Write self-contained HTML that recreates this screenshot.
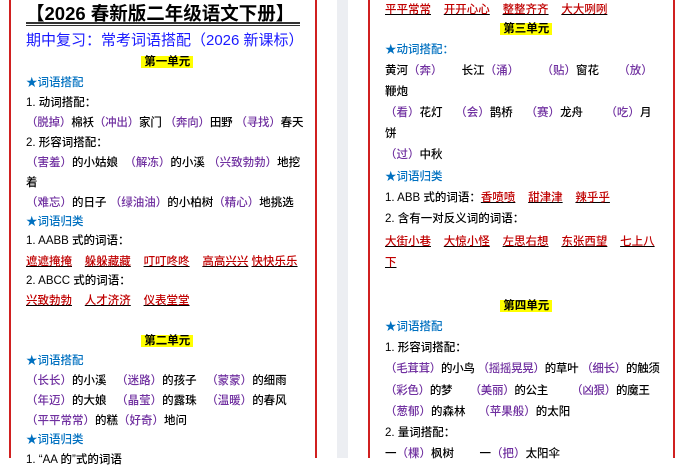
<!DOCTYPE html>
<html><head><meta charset="utf-8">
<style>
body{margin:0;width:682px;height:458px;overflow:hidden;background:#fff;position:relative;font-family:"Liberation Sans","Noto Sans CJK SC",sans-serif;font-size:11.5px;color:#000;font-weight:500;}
.l{position:absolute;white-space:pre;line-height:16px;}
.p{color:#7030a0}
.b{color:#0070c0}
.r{color:#c00000;text-decoration:underline;text-decoration-color:#000}
.h{background:#ffff00;font-weight:bold;color:#000}
.vl{position:absolute;top:0;height:458px;width:2px;background:#d02020}
</style></head><body>
<div class="vl" style="left:9px"></div>
<div class="vl" style="left:315px"></div>
<div style="position:absolute;left:337px;top:0;width:11px;height:458px;background:#eceef2"></div>
<div class="vl" style="left:368px"></div>
<div class="vl" style="left:673px"></div>

<div class="l" style="left:26px;top:3px;font-size:18.5px;font-weight:bold;line-height:22px;">【2026 春新版二年级语文下册】</div>
<div style="position:absolute;left:26px;top:22px;width:274px;height:1px;border-top:2px solid #333;border-bottom:1px solid #333;"></div>
<div class="l" style="left:26px;top:32px;font-size:15px;color:#1a1aff;line-height:18px;font-weight:normal;">期中复习：常考词语搭配（2026 新课标）</div>
<div class="l" style="left:141px;top:54px;"><span class="h"> 第一单元 </span></div>
<div class="l b" style="left:26px;top:75px;">★词语搭配</div>
<div class="l" style="left:26px;top:95px;">1. 动词搭配：</div>
<div class="l" style="left:26px;top:115px;letter-spacing:-0.2px"><span class="p">（脱掉）</span>棉袄<span class="p">（冲出）</span>家门 <span class="p">（奔向）</span>田野 <span class="p">（寻找）</span>春天</div>
<div class="l" style="left:26px;top:135px;">2. 形容词搭配：</div>
<div class="l" style="left:26px;top:155px;"><span class="p">（害羞）</span>的小姑娘  <span class="p">（解冻）</span>的小溪 <span class="p">（兴致勃勃）</span>地挖</div>
<div class="l" style="left:26px;top:175px;">着</div>
<div class="l" style="left:26px;top:195px;"><span class="p">（难忘）</span>的日子 <span class="p">（绿油油）</span>的小柏树<span class="p">（精心）</span>地挑选</div>
<div class="l b" style="left:26px;top:214px;">★词语归类</div>
<div class="l" style="left:26px;top:233px;">1. AABB 式的词语：</div>
<div class="l" style="left:26px;top:254px;"><span class="r">遮遮掩掩</span>    <span class="r">躲躲藏藏</span>    <span class="r">叮叮咚咚</span>    <span class="r">高高兴兴</span> <span class="r">快快乐乐</span></div>
<div class="l" style="left:26px;top:273px;">2. ABCC 式的词语：</div>
<div class="l" style="left:26px;top:293px;"><span class="r">兴致勃勃</span>    <span class="r">人才济济</span>    <span class="r">仪表堂堂</span></div>
<div class="l" style="left:141px;top:333px;"><span class="h"> 第二单元 </span></div>
<div class="l b" style="left:26px;top:353px;">★词语搭配</div>
<div class="l" style="left:26px;top:373px;"><span class="p">（长长）</span>的小溪   <span class="p">（迷路）</span>的孩子   <span class="p">（蒙蒙）</span>的细雨</div>
<div class="l" style="left:26px;top:393px;"><span class="p">（年迈）</span>的大娘   <span class="p">（晶莹）</span>的露珠   <span class="p">（温暖）</span>的春风</div>
<div class="l" style="left:26px;top:413px;"><span class="p">（平平常常）</span>的糕<span class="p">（好奇）</span>地问</div>
<div class="l b" style="left:26px;top:432px;">★词语归类</div>
<div class="l" style="left:26px;top:452px;">1. “AA 的”式的词语</div>

<div class="l" style="left:385px;top:2px;"><span class="r">平平常常</span>    <span class="r">开开心心</span>    <span class="r">整整齐齐</span>    <span class="r">大大咧咧</span></div>
<div class="l" style="left:500px;top:21px;"><span class="h"> 第三单元 </span></div>
<div class="l b" style="left:385px;top:42px;">★动词搭配：</div>
<div class="l" style="left:385px;top:63px;">黄河<span class="p">（奔）</span>      长江<span class="p">（涌）</span>       <span class="p">（贴）</span>窗花      <span class="p">（放）</span></div>
<div class="l" style="left:385px;top:84px;">鞭炮</div>
<div class="l" style="left:385px;top:105px;"><span class="p">（看）</span>花灯    <span class="p">（会）</span>鹊桥    <span class="p">（赛）</span>龙舟       <span class="p">（吃）</span>月</div>
<div class="l" style="left:385px;top:126px;">饼</div>
<div class="l" style="left:385px;top:147px;"><span class="p">（过）</span>中秋</div>
<div class="l b" style="left:385px;top:169px;">★词语归类</div>
<div class="l" style="left:385px;top:190px;">1. ABB 式的词语：<span class="r">香喷喷</span>    <span class="r">甜津津</span>    <span class="r">辣乎乎</span></div>
<div class="l" style="left:385px;top:211px;">2. 含有一对反义词的词语：</div>
<div class="l" style="left:385px;top:234px;"><span class="r">大街小巷</span>    <span class="r">大惊小怪</span>    <span class="r">左思右想</span>    <span class="r">东张西望</span>    <span class="r">七上八</span></div>
<div class="l" style="left:385px;top:255px;"><span class="r">下</span></div>
<div class="l" style="left:500px;top:298px;"><span class="h"> 第四单元 </span></div>
<div class="l b" style="left:385px;top:319px;">★词语搭配</div>
<div class="l" style="left:385px;top:340px;">1. 形容词搭配：</div>
<div class="l" style="left:385px;top:361px;letter-spacing:-0.3px"><span class="p">（毛茸茸）</span>的小鸟 <span class="p">（摇摇晃晃）</span>的草叶 <span class="p">（细长）</span>的触须</div>
<div class="l" style="left:385px;top:383px;letter-spacing:-0.3px"><span class="p">（彩色）</span>的梦      <span class="p">（美丽）</span>的公主        <span class="p">（凶狠）</span>的魔王</div>
<div class="l" style="left:385px;top:404px;"><span class="p">（葱郁）</span>的森林    <span class="p">（苹果般）</span>的太阳</div>
<div class="l" style="left:385px;top:425px;">2. 量词搭配：</div>
<div class="l" style="left:385px;top:446px;">一<span class="p">（棵）</span>枫树        一<span class="p">（把）</span>太阳伞</div>
</body></html>
